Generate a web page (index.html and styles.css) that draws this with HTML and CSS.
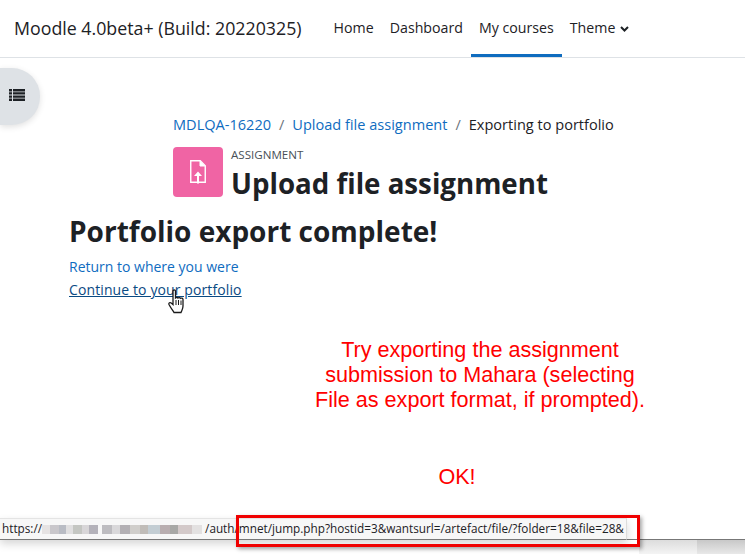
FILE: index.html
```html
<!DOCTYPE html>
<html lang="en">
<head>
    <meta charset="UTF-8">
    <title>Exporting to portfolio</title>
    <link rel="stylesheet" href="styles.css">
</head>
<body>

    <header class="navbar">
        <span class="site-name">Moodle 4.0beta+ (Build: 20220325)</span>
        <nav class="primary-nav">
            <a href="#">Home</a>
            <a href="#">Dashboard</a>
            <a href="#" class="active">My courses</a>
            <a href="#">Theme
                <svg class="caret" width="9" height="6" viewBox="0 0 9 6"><path d="M1 1l3.500 3.500L8 1" fill="none" stroke="#1d2125" stroke-width="2"/></svg>
            </a>
        </nav>
    </header>

    <button class="drawer-toggle">
        <svg width="16" height="12" viewBox="0 0 16 12"><path fill="#1d2125" d="M0 0h3v2.400H0zM4 0h12v2.400H4zM0 3.200h3v2.400H0zM4 3.200h12v2.400H4zM0 6.400h3v2.400H0zM4 6.400h12v2.400H4zM0 9.600h3V12H0zM4 9.600h12V12H4z"/></svg>
    </button>

    <main class="page">
        <div class="page-top">
            <ol class="breadcrumb">
                <li><a href="#">MDLQA-16220</a></li>
                <li class="sep">/</li>
                <li><a href="#">Upload file assignment</a></li>
                <li class="sep">/</li>
                <li>Exporting to portfolio</li>
            </ol>
            <div class="activity-head">
                <div class="activity-icon">
                    <svg width="16" height="24" viewBox="0 0 16 24">
                        <path d="M.75.75h9.500l5 5v16.500H.75z" fill="none" stroke="#fff" stroke-width="1.400"/>
                        <path d="M10 1v5h5" fill="#fff" stroke="#fff"/>
                        <path d="M8 11.500l4 4.500H9v7.500H7V16H4z" fill="#fff"/>
                    </svg>
                </div>
                <div>
                    <div class="activity-type">ASSIGNMENT</div>
                    <h1>Upload file assignment</h1>
                </div>
            </div>
        </div>
        <h2>Portfolio export complete!</h2>
        <p class="links"><a href="#">Return to where you were</a></p>
        <p class="links"><a href="#" class="hover">Continue to your portfolio</a></p>
    </main>

    <!-- puntero de la captura -->
    <svg class="cursor" width="18" height="26" viewBox="0 0 18 26">
        <path d="M5 2c0-1.500 2.500-1.500 2.500 0v7c1-.7 2-.7 2.500 0 .8-.6 2-.5 2.500.3 .8-.5 2.500-.3 2.500 1.200v6.500c0 3-1 4-2 6.500H6c-1-2-3-4-5-8-.6-1.500 1-2.500 2.200-1.500L5 15.500z" fill="#fff" stroke="#1a1a1a" stroke-width="1.300"/>
        <path d="M8 11v5M10.500 11v5M13 11.500V16" stroke="#1a1a1a" stroke-width="1"/>
    </svg>

    <div class="note note-main">Try exporting the assignment<br>submission to Mahara (selecting<br>File as export format, if prompted).</div>
    <div class="note note-ok">OK!</div>

    <div class="desk-strip">
        <div class="strip-light"></div>
        <div class="strip-dark"></div>
    </div>

    <div class="statusbar">
        <span>https://</span><span class="blur"><i class="blur-a"></i><i class="blur-b"></i></span><span>/auth/mnet/jump.php?hostid=3&amp;wantsurl=/artefact/file/?folder=18&amp;file=28&amp;</span>
    </div>
    <div class="redbox"></div>

</body>
</html>
```

FILE: styles.css
```css
body {
    font-family: "Open Sans", "Noto Sans", sans-serif;
    font-size: 14px;
    color: #1d2125;
    background-color: white;
    margin: 0;
    height: 554px;
    overflow: hidden;
    position: relative;
}

a {
    color: #0f6cbf;
    text-decoration: none;
}

.navbar {
    height: 57px;
    border-bottom: 1px solid #dee2e6;
    display: flex;
    align-items: stretch;
    padding-left: 14px;
}

.site-name {
    font-size: 17.800px;
    line-height: 56px;
    margin-right: 24px;
    white-space: nowrap;
}

.primary-nav {
    display: flex;
}

.primary-nav a {
    color: #1d2125;
    font-size: 14.200px;
    line-height: 56px;
    padding: 0 8px;
    height: 57px;
    box-sizing: border-box;
}

.primary-nav a.active {
    border-bottom: 3px solid #0f6cbf;
}

.caret {
    margin-left: 1px;
    vertical-align: 1px;
}

.drawer-toggle {
    position: absolute;
    left: 0;
    top: 68px;
    width: 40px;
    height: 57px;
    border: none;
    padding: 0 0 0 9px;
    text-align: left;
    background-color: #dee2e6;
    border-radius: 0 28px 28px 0;
    box-shadow: 0 2px 6px rgba(0, 0, 0, 0.12);
}

.page {
    padding: 56px 0 0 69px;
}

.page-top {
    margin-left: 104px;
}

.breadcrumb {
    list-style: none;
    margin: 0;
    padding: 0;
    display: flex;
    font-size: 14.550px;
    line-height: 20px;
    white-space: nowrap;
}

.breadcrumb .sep {
    color: #6a737b;
    margin: 0 8px;
}

.activity-head {
    display: flex;
    margin-top: 13px;
}

.activity-icon {
    width: 50px;
    height: 50px;
    background-color: #f064a4;
    border-radius: 4px;
    margin-right: 8px;
    display: flex;
    align-items: center;
    justify-content: center;
}

.activity-type {
    font-size: 11.600px;
    color: #495057;
    line-height: 16px;
}

h1 {
    margin: 0;
    font-size: 27.700px;
    font-weight: 700;
    line-height: 40px;
    white-space: nowrap;
}

h2 {
    margin: 7px 0 0;
    font-size: 28px;
    font-weight: 700;
    line-height: 42px;
}

.links {
    margin: 0;
    line-height: 23px;
}

.links:first-of-type {
    margin-top: 3px;
}

a.hover {
    color: #0a4a83;
    text-decoration: underline;
    letter-spacing: 0.110px;
}

.cursor {
    position: absolute;
    left: 168px;
    top: 289px;
}

.note {
    position: absolute;
    color: #ff0000;
    font-family: "Liberation Sans", Arial, sans-serif;
    font-size: 21.600px;
    line-height: 25px;
    text-align: center;
    white-space: nowrap;
}

.note-main {
    left: 300px;
    top: 337px;
    width: 360px;
}

.note-ok {
    left: 420px;
    top: 464px;
    width: 74px;
}

.desk-strip {
    position: absolute;
    left: 0;
    right: 0;
    top: 539px;
    height: 15px;
    box-sizing: border-box;
    border-top: 1px solid #777;
    display: flex;
    justify-content: flex-end;
}

.strip-light {
    width: 58px;
    background: linear-gradient(#dcdcdc, #f4f4f4);
}

.strip-dark {
    width: 48px;
    background: linear-gradient(#c8c8c8, #e8e8e8);
}

.statusbar {
    position: absolute;
    left: 0;
    top: 518px;
    width: 627px;
    height: 22px;
    box-sizing: border-box;
    background-color: #f7f7f7;
    border-top: 1px solid #e4e4e4;
    border-right: 1px solid #dcdcdc;
    border-bottom: 1px solid #777;
    box-shadow: 0 4px 8px rgba(0, 0, 0, 0.16);
    padding-left: 2px;
    font-size: 11.750px;
    line-height: 19px;
    display: flex;
    white-space: nowrap;
}

.blur {
    display: flex;
    align-items: center;
    width: 163px;
    gap: 4px;
}

.blur i {
    height: 9px;
    display: block;
    filter: blur(0.6px);
}

.blur-a {
    width: 56px;
    background: linear-gradient(90deg, #e6e3e3 0 14%, #c9c7cb 14% 30%, #b9bcc4 30% 42%, #e0dfe0 42% 56%, #c4c6c2 56% 72%, #d8d6d8 72% 84%, #b4b2ba 84%);
}

.blur-b {
    width: 100px;
    background: linear-gradient(90deg, #bdbcc0 0 10%, #d9d8da 10% 18%, #b3b0b4 18% 28%, #d0cecb 28% 38%, #c0bcb8 38% 46%, #c3cdd3 46% 58%, #b9aeb0 58% 68%, #a8a8a6 68% 76%, #d3c9c9 76% 90%, #e3e1e1 90%);
}

.redbox {
    position: absolute;
    left: 236px;
    top: 515px;
    width: 404px;
    height: 32px;
    box-sizing: border-box;
    border: 3px solid #f00000;
    box-shadow: 2px 2px 4px rgba(0, 0, 0, 0.35);
}
```
